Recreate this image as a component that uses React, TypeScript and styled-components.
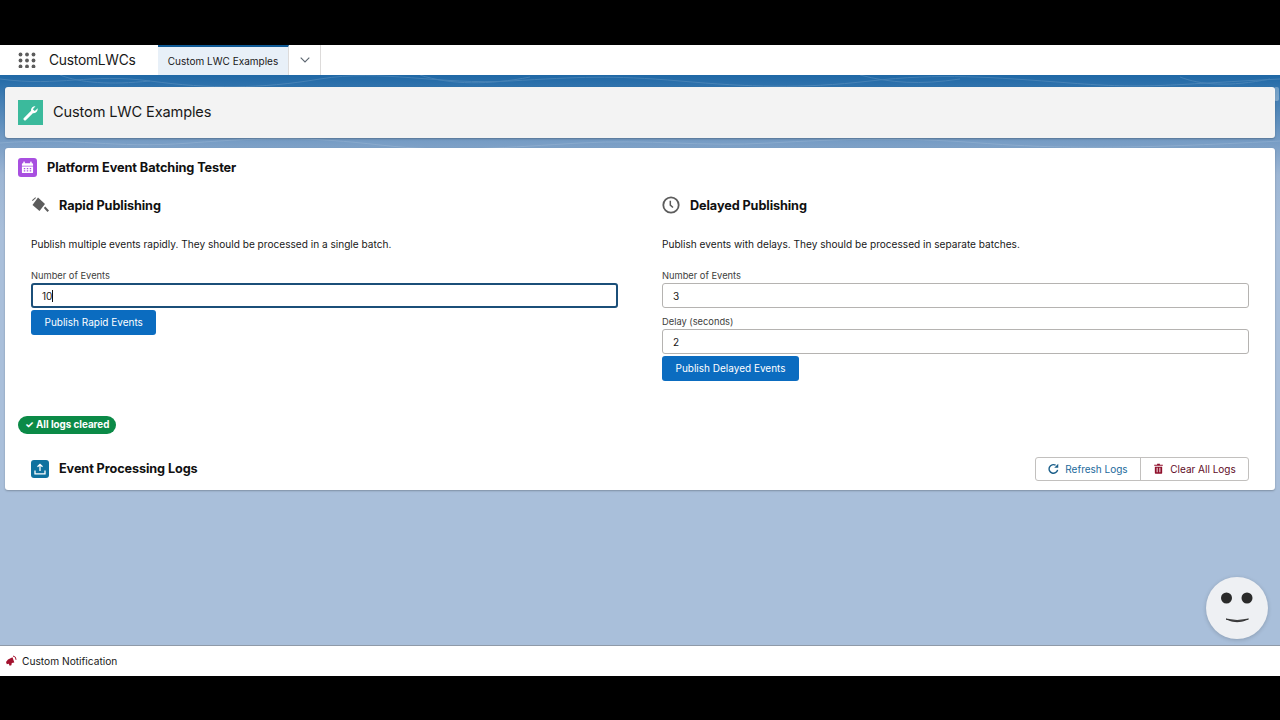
import styled, { createGlobalStyle } from 'styled-components'

const GlobalStyle = createGlobalStyle`
  html, body {
    margin: 0;
    padding: 0;
    background: #000;
    overflow: hidden;
  }

  * {
    box-sizing: border-box;
  }

  body {
    font-family: Inter, "Liberation Sans", sans-serif;
    color: #111;
  }
`

const Page = styled.div`
  position: relative;
  width: 1280px;
  height: 720px;
  padding-block: 45px 44px;
  display: flex;
  flex-direction: column;
  background: #000;
`

const NavBar = styled.nav`
  height: 30px;
  flex: none;
  display: flex;
  align-items: stretch;
  background: #fff;
`

const AppLauncher = styled.div`
  width: 158px;
  display: flex;
  align-items: center;
  gap: 13px;
  padding-inline-start: 18px;
`

const AppName = styled.span`
  font-size: 13.8px;
  letter-spacing: -0.25px;
  color: #181818;
`

const ActiveTab = styled.div`
  width: 131px;
  display: flex;
  align-items: center;
  justify-content: center;
  padding-block-end: 1px;
  font-size: 10px;
  color: #181818;
  background: #e8f0f8;
  border-block-start: 2px solid #0f5a96;
  border-inline-end: 1px solid #dddbda;
`

const TabMenu = styled.div`
  width: 32px;
  display: flex;
  align-items: center;
  justify-content: center;
  border-inline-end: 1px solid #dddbda;
`

const Main = styled.main`
  position: relative;
  flex: 1;
  overflow: hidden;
  padding: 12px 5px 0;
  display: flex;
  flex-direction: column;
  gap: 10px;
  background: linear-gradient(180deg, #1f68a6 0, #3f7cb2 22px, #7b9fc6 70px, #9db6d4 100px, #a9bfda 160px);
`

const Topo = styled.svg`
  position: absolute;
  inset: 0 0 auto;
  width: 100%;
  height: 90px;
  opacity: 0.16;
`

const PageHeader = styled.header`
  position: relative;
  height: 51px;
  flex: none;
  display: flex;
  align-items: center;
  gap: 10px;
  padding-inline-start: 13px;
  background: #f3f3f3;
  border-radius: 3px;
  box-shadow: 0 1px 2px rgba(0, 0, 0, 0.25);
`

const HeaderIcon = styled.div`
  width: 25px;
  height: 25px;
  display: flex;
  align-items: center;
  justify-content: center;
  background: #3bba9c;
`

const PageTitle = styled.h1`
  margin: 0;
  padding-block-end: 1px;
  font-size: 14.6px;
  font-weight: 400;
  letter-spacing: -0.15px;
  color: #181818;
`

const Card = styled.section`
  position: relative;
  height: 342px;
  flex: none;
  padding: 10px 26px 0 13px;
  background: #fff;
  border-radius: 3px;
  box-shadow: 0 1px 2px rgba(0, 0, 0, 0.25);
`

const CardTitleRow = styled.div`
  height: 18px;
  display: flex;
  align-items: center;
  gap: 10px;
`

const TileIcon = styled.div<{ $bg: string; $size: number }>`
  width: ${(p) => p.$size}px;
  height: ${(p) => p.$size}px;
  flex: none;
  display: flex;
  align-items: center;
  justify-content: center;
  background: ${(p) => p.$bg};
  border-radius: 3px;
`

const CardTitle = styled.h2`
  margin: 0;
  font-size: 12.75px;
  font-weight: 700;
  letter-spacing: -0.1px;
  color: #111;
`

const Columns = styled.div`
  display: grid;
  grid-template-columns: 1fr 1fr;
  column-gap: 44px;
  margin-block-start: 19px;
  margin-inline-start: 13px;
  height: 217px;
`

const Column = styled.div`
  display: flex;
  flex-direction: column;
  align-items: flex-start;
`

const SectionHead = styled.div`
  height: 20px;
  display: flex;
  align-items: center;
  gap: 10px;
`

const IconSlot = styled.div`
  width: 18px;
  height: 18px;
  display: flex;
  align-items: center;
  justify-content: center;
`

const SectionTitle = styled.h3`
  margin: 0;
  font-size: 12.7px;
  font-weight: 700;
  letter-spacing: -0.1px;
  color: #111;
`

const Description = styled.p`
  margin: 22px 0 0;
  height: 14px;
  line-height: 14px;
  font-size: 10.1px;
  color: #181818;
`

const Label = styled.label<{ $gap: number }>`
  display: block;
  margin-block-start: ${(p) => p.$gap}px;
  height: 14px;
  line-height: 14px;
  font-size: 9.3px;
  color: #3e3e3c;
`

const Input = styled.div<{ $focused?: boolean }>`
  width: 100%;
  height: 25px;
  padding-inline-start: ${(p) => (p.$focused ? '9px' : '10px')};
  display: flex;
  align-items: center;
  font-size: 10px;
  color: #181818;
  background: #fff;
  border: ${(p) => (p.$focused ? '2px solid #1b4f79' : '1px solid #b5b3b1')};
  border-radius: 3px;
`

const Caret = styled.span`
  display: inline-block;
  width: 1px;
  height: 12px;
  background: #111;
`

const PrimaryButton = styled.button<{ $top: number }>`
  height: 24.5px;
  margin-block-start: ${(p) => p.$top}px;
  padding-inline: 13.5px;
  font-family: inherit;
  font-size: 10px;
  color: #fff;
  background: #0b6cc0;
  border: none;
  border-radius: 3px;
`

const Badge = styled.span`
  display: inline-flex;
  align-items: center;
  height: 18px;
  padding-inline: 7px;
  font-size: 9.8px;
  font-weight: 700;
  color: #fff;
  background: #0b8a47;
  border-radius: 9px;
`

const LogsHead = styled.div`
  margin-block-start: 23px;
  margin-inline-start: 13px;
  display: flex;
  align-items: center;
  justify-content: space-between;
  height: 24px;
`

const LogsTitle = styled.div`
  display: flex;
  align-items: center;
  gap: 10px;
`

const ButtonGroup = styled.div`
  display: flex;
  height: 24px;
  border: 1px solid #c2c0be;
  border-radius: 3px;
  background: #fff;
`

const GroupButton = styled.div<{ $color: string; $width: number; $divider?: boolean }>`
  width: ${(p) => p.$width}px;
  display: flex;
  align-items: center;
  justify-content: center;
  gap: 6px;
  font-size: 10px;
  color: ${(p) => p.$color};
  border-inline-end: ${(p) => (p.$divider ? '1px solid #c2c0be' : 'none')};
`

const Footer = styled.footer`
  height: 31px;
  flex: none;
  display: flex;
  align-items: center;
  gap: 5px;
  padding-inline-start: 5px;
  font-size: 10.2px;
  color: #181818;
  background: #fff;
  border-block-start: 1px solid #8f9aa8;
`

const Assistant = styled.div`
  position: absolute;
  left: 1206px;
  top: 577px;
  width: 62px;
  height: 62px;
  border-radius: 50%;
  background: #eef0f3;
  box-shadow: 0 1px 4px rgba(0, 0, 0, 0.18);
`

const ScrollThumb = styled.div`
  position: absolute;
  right: 1px;
  top: 87px;
  width: 5px;
  height: 14px;
  border-radius: 2px;
  background: rgba(255, 255, 255, 0.3);
`

const WaffleIcon = () => (
  <svg width="18" height="16" viewBox="0 0 18 16" fill="#5c5c5c">
    {[2.5, 8.5, 14.5].flatMap((y) =>
      [2.5, 9, 15.5].map((x) => <circle key={`${x}-${y}`} cx={x} cy={y} r="1.9" />)
    )}
  </svg>
)

const App = () => (
  <>
    <GlobalStyle />
    <Page>
      <NavBar>
        <AppLauncher>
          <WaffleIcon />
          <AppName>CustomLWCs</AppName>
        </AppLauncher>
        <ActiveTab>Custom LWC Examples</ActiveTab>
        <TabMenu>
          <svg width="10" height="6" viewBox="0 0 10 6" fill="none" stroke="#5c6670" strokeWidth="1.1">
            <path d="M0.7 0.7 5 5 9.3 0.7" />
          </svg>
        </TabMenu>
      </NavBar>

      <Main>
        <Topo viewBox="0 0 1280 90" preserveAspectRatio="none" fill="none" stroke="#dfeaf5" strokeWidth="1">
          <path d="M0 4c60 8 90-6 150 2s110 8 170-2 120 6 190 2 100-6 170 0 120 8 190 0 120-4 200 2 90 2 210-4" />
          <path d="M0 68c80-6 110 6 190 0s120-6 190 2 130 2 200-2 120 4 190 0 130-6 210 0 150 6 300-2" />
          <path d="M60 0c20 8 50 10 90 6M420 0c30 10 70 10 110 2M860 0c30 8 60 10 100 4M1180 2c20 8 50 10 90 2" />
        </Topo>
        <PageHeader>
          <HeaderIcon>
            <svg width="16" height="16" viewBox="0 0 16 16" fill="none" stroke="#fff">
              <path d="M2 14 8.600 7.400" strokeWidth="3" strokeLinecap="round" />
              <path d="M14.700 3.300 11.800 6 9.800 4.200 12.500 1.200C10.400 0.800 8.200 2.500 8 4.700 7.900 6.300 8.800 8 10.500 8.200 12.800 8.500 15 6 14.700 3.300Z" fill="#fff" stroke="none" />
            </svg>
          </HeaderIcon>
          <PageTitle>Custom LWC Examples</PageTitle>
        </PageHeader>

        <Card>
          <CardTitleRow>
            <TileIcon $bg="#a84fe0" $size={19}>
              <svg width="13" height="13" viewBox="0 0 14 14" fill="#fff">
                <rect x="2.500" y="0.500" width="1.600" height="3" rx="0.500" />
                <rect x="9.900" y="0.500" width="1.600" height="3" rx="0.500" />
                <path d="M1 3.500a1 1 0 0 1 1-1h10a1 1 0 0 1 1 1V5H1z" />
                <path fillRule="evenodd" d="M1 6h12v6a1 1 0 0 1-1 1H2a1 1 0 0 1-1-1zm2 1.500v1.300h1.600V7.500zm3.200 0v1.300h1.600V7.500zm3.200 0v1.300H11V7.500zM3 10v1.300h1.600V10zm3.200 0v1.300h1.600V10zm3.200 0v1.300H11V10z" />
              </svg>
            </TileIcon>
            <CardTitle>Platform Event Batching Tester</CardTitle>
          </CardTitleRow>

          <Columns>
            <Column>
              <SectionHead>
                <IconSlot>
                  <svg width="18" height="18" viewBox="0 0 18 18" fill="#5c5c5c">
                    <path d="M7 1.500 14 8 8.500 15 1.500 9z" />
                    <path d="M12.800 12 14.200 10.600 18 14.500 16.500 16z" />
                    <path d="M1 4.200 4.300 1.200 5 1.900 1.700 5z" />
                  </svg>
                </IconSlot>
                <SectionTitle>Rapid Publishing</SectionTitle>
              </SectionHead>
              <Description>Publish multiple events rapidly. They should be processed in a single batch.</Description>
              <Label $gap={18}>Number of Events</Label>
              <Input $focused>
                10
                <Caret />
              </Input>
              <PrimaryButton $top={2}>Publish Rapid Events</PrimaryButton>
            </Column>

            <Column>
              <SectionHead>
                <IconSlot>
                  <svg width="18" height="18" viewBox="0 0 18 18" fill="none" stroke="#5c5c5c">
                    <circle cx="9" cy="9" r="7.700" strokeWidth="1.800" />
                    <path d="M8.300 4.700V9.100L11 11.500" strokeWidth="1.500" />
                  </svg>
                </IconSlot>
                <SectionTitle>Delayed Publishing</SectionTitle>
              </SectionHead>
              <Description>Publish events with delays. They should be processed in separate batches.</Description>
              <Label $gap={18}>Number of Events</Label>
              <Input>3</Input>
              <Label $gap={7}>Delay (seconds)</Label>
              <Input>2</Input>
              <PrimaryButton $top={2}>Publish Delayed Events</PrimaryButton>
            </Column>
          </Columns>

          <Badge>✓ All logs cleared</Badge>

          <LogsHead>
            <LogsTitle>
              <TileIcon $bg="#10729f" $size={18}>
                <svg width="12" height="12" viewBox="0 0 12 12" fill="none" stroke="#fff" strokeWidth="1.300">
                  <path d="M6 8V1.500M3.500 3.800 6 1.300 8.500 3.800" />
                  <path d="M1 7.500V10.800H11V7.500" />
                </svg>
              </TileIcon>
              <SectionTitle>Event Processing Logs</SectionTitle>
            </LogsTitle>
            <ButtonGroup>
              <GroupButton $color="#1b6a9c" $width={105} $divider>
                <svg width="11" height="11" viewBox="0 0 12 12" fill="none" stroke="#1b5f8a" strokeWidth="1.500">
                  <path d="M10.500 7.500A4.700 4.700 0 1 1 8.300 2.400" />
                  <path d="M6.800 5.200H11.200V0.800z" fill="#1b5f8a" stroke="none" />
                </svg>
                Refresh Logs
              </GroupButton>
              <GroupButton $color="#5e0a26" $width={107}>
                <svg width="11" height="11" viewBox="0 0 12 12" fill="#8f0f2b">
                  <path d="M4.500 0.800h3v1h3.200v1.300H1.300V1.800h3.200z" />
                  <path fillRule="evenodd" d="M2 4h8v7a.8.8 0 0 1-.8.8H2.800A.8.8 0 0 1 2 11zm2 1.300v4.800h1V5.300zm3 0v4.800h1V5.300z" />
                </svg>
                Clear All Logs
              </GroupButton>
            </ButtonGroup>
          </LogsHead>
        </Card>
      </Main>

      <Footer>
        <svg width="12" height="12" viewBox="0 0 12 12" fill="#a3122e">
          <path d="M1 7 3 4.500 7.500 2.200 9.300 7.500 6.800 8 6.400 10.300 4.600 10.800 3.800 8.800 1.800 9.200z" />
          <path d="M8 1a3.500 3.500 0 0 1 3 3.800" fill="none" stroke="#a3122e" strokeWidth="1" />
        </svg>
        Custom Notification
      </Footer>

      <ScrollThumb />
      <Assistant>
        <svg width="62" height="62" viewBox="0 0 62 62">
          <circle cx="20.500" cy="21" r="5.500" fill="#2a2a2a" />
          <circle cx="41" cy="21" r="5.500" fill="#2a2a2a" />
          <path d="M20 42Q31 47.500 42.500 42Q31 45 20 42z" fill="#222" stroke="#222" strokeWidth="0.800" />
        </svg>
      </Assistant>
    </Page>
  </>
)

export default App
